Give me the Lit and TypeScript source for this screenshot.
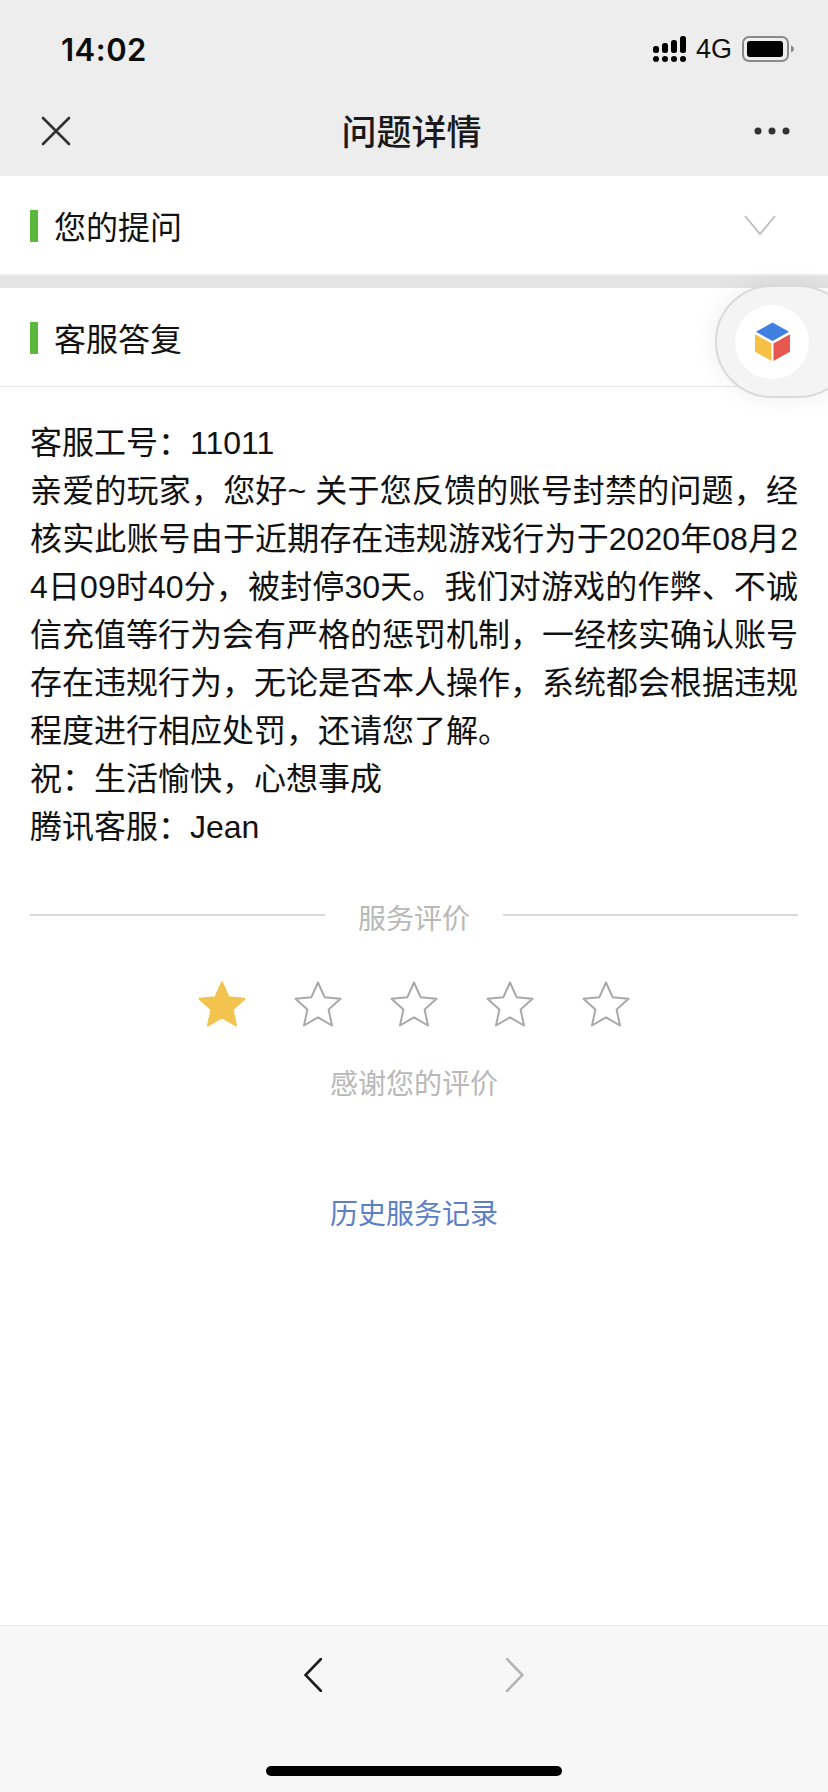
import { LitElement, html, css, svg } from 'lit';
import { customElement } from 'lit/decorators.js';

const STAR = '24,2.5 30.6,17.2 46.5,18.8 34.6,29.6 38,45.5 24,37.4 10,45.5 13.4,29.6 1.5,18.8 17.4,17.2';

@customElement('app-root')
export class AppRoot extends LitElement {
  static styles = css`
    :host {
      display: block;
      position: relative;
      height: 1792px;
      overflow: hidden;
      background: #fff;
      color: #111;
      font-family: "Liberation Sans", "Noto Sans CJK SC", sans-serif;
    }

    .page {
      display: flex;
      flex-direction: column;
      height: 100%;
    }

    .header {
      height: 176px;
      flex: none;
      background: #ededed;
    }

    .status {
      display: flex;
      justify-content: space-between;
      align-items: center;
      height: 98px;
      padding: 0 34px 0 61px;
      box-sizing: border-box;
    }

    .time {
      font-family: Inter, sans-serif;
      font-size: 31px;
      font-weight: 600;
      letter-spacing: 0.5px;
      color: #0c0c0c;
    }

    .indicators {
      display: flex;
      align-items: center;
      gap: 10px;
    }

    .net {
      font-size: 27px;
      color: #111;
    }

    .nav {
      display: grid;
      grid-template-columns: 1fr auto 1fr;
      align-items: center;
      height: 66px;
      padding: 0 46px 0 41px;
    }

    .nav .more {
      justify-self: end;
      display: block;
      margin-right: -8px;
    }

    .nav-title {
      padding-bottom: 4px;
      font-size: 35px;
      font-weight: 500;
      color: #1a1a1a;
    }

    .section {
      display: flex;
      align-items: center;
      flex: none;
      height: 98px;
      padding: 0 52px 0 30px;
      font-size: 32px;
      color: #111;
      box-sizing: border-box;
    }

    .section.answer {
      height: 99px;
      border-bottom: 1px solid #e6e6e6;
    }

    .mark {
      width: 8px;
      height: 32px;
      margin: 1px 16px 0 0;
      background: #5cb83c;
    }

    .section-name {
      flex: 1;
    }

    .gap {
      height: 14px;
      flex: none;
      background: #e4e4e4;
      border-top: 2px solid #eee;
      box-sizing: border-box;
    }

    .reply {
      flex: 1;
      padding: 32px 30px 0;
    }

    .body-text {
      margin: 0;
      font-size: 32px;
      line-height: 48px;
      word-break: break-all;
      text-align: justify;
      color: #111;
    }

    .rating-head {
      display: flex;
      align-items: flex-start;
      margin-top: 49px;
      font-size: 28px;
      line-height: 40px;
      color: #b8b8b8;
    }

    .rating-head .line {
      flex: 1;
      height: 2px;
      margin-top: 14px;
      background: #d9d9d9;
    }

    .rating-head span {
      padding: 0 33px;
    }

    .stars {
      display: flex;
      justify-content: center;
      gap: 48px;
      margin-top: 40px;
    }

    .stars svg {
      display: block;
    }

    .thanks,
    .history {
      font-size: 28px;
      line-height: 40px;
      text-align: center;
    }

    .thanks {
      margin-top: 37px;
      color: #b8b8b8;
    }

    .history {
      margin-top: 90px;
      color: #5b80c8;
    }

    .footer {
      position: relative;
      flex: none;
      height: 167px;
      background: #f7f7f7;
      border-top: 1px solid #e6e6e6;
      box-sizing: border-box;
    }

    .pager {
      display: flex;
      justify-content: center;
      gap: 184px;
      padding-top: 32px;
    }

    .home {
      position: absolute;
      left: 266px;
      bottom: 16px;
      width: 296px;
      height: 10px;
      border-radius: 5px;
      background: #000;
    }

    .float {
      position: absolute;
      left: 715px;
      top: 285px;
      width: 140px;
      height: 113px;
      display: flex;
      align-items: center;
      padding-left: 18px;
      box-sizing: border-box;
      border: 2px solid #dadada;
      border-radius: 57px;
      background: #f4f4f4;
      box-shadow: 0 0 24px rgba(0, 0, 0, 0.07);
    }

    .float-icon {
      display: flex;
      align-items: center;
      justify-content: center;
      width: 74px;
      height: 74px;
      border-radius: 50%;
      background: #fff;
    }
  `;

  private star(filled: boolean) {
    return html`<svg width="48" height="48" viewBox="0 0 48 48">
      ${svg`<polygon
        points=${STAR}
        fill=${filled ? '#f2c44f' : 'none'}
        stroke=${filled ? '#f2c44f' : '#a8a8a8'}
        stroke-width="2"
        stroke-linejoin="round"
      ></polygon>`}
    </svg>`;
  }

  render() {
    return html`
      <div class="page">
        <div class="header">
          <div class="status">
            <span class="time">14:02</span>
            <div class="indicators">
              <svg width="33" height="26" viewBox="0 0 33 26" fill="#000">
                <rect x="0" y="10" width="6" height="7" rx="2.5"></rect>
                <rect x="9" y="7" width="6" height="10" rx="2.5"></rect>
                <rect x="18" y="4" width="6" height="13" rx="2.5"></rect>
                <rect x="27" y="0" width="6" height="17" rx="2.5"></rect>
                <circle cx="3" cy="23" r="3"></circle>
                <circle cx="12" cy="23" r="3"></circle>
                <circle cx="21" cy="23" r="3"></circle>
                <circle cx="30" cy="23" r="3"></circle>
              </svg>
              <span class="net">4G</span>
              <svg width="52" height="26" viewBox="0 0 52 26">
                <rect x="1" y="1" width="45" height="24" rx="6" fill="none" stroke="#8a8a8a" stroke-width="2"></rect>
                <rect x="5" y="5" width="36" height="16" rx="3" fill="#000"></rect>
                <path d="M49 9.5c1.8.6 3 2 3 3.5s-1.200 2.900-3 3.500z" fill="#8a8a8a"></path>
              </svg>
            </div>
          </div>
          <div class="nav">
            <svg width="30" height="30" viewBox="0 0 30 30">
              <path d="M2 2l26 26M28 2L2 28" stroke="#333" stroke-width="2.600" stroke-linecap="round"></path>
            </svg>
            <span class="nav-title">问题详情</span>
            <svg class="more" width="36" height="8" viewBox="0 0 36 8" fill="#333">
              <circle cx="4" cy="4" r="3.500"></circle>
              <circle cx="18" cy="4" r="3.500"></circle>
              <circle cx="32" cy="4" r="3.500"></circle>
            </svg>
          </div>
        </div>

        <div class="section">
          <i class="mark"></i>
          <span class="section-name">您的提问</span>
          <svg width="32" height="20" viewBox="0 0 32 20">
            <path d="M1 1l15 18L31 1" fill="none" stroke="#bbb" stroke-width="1.800"></path>
          </svg>
        </div>
        <div class="gap"></div>
        <div class="section answer">
          <i class="mark"></i>
          <span class="section-name">客服答复</span>
        </div>

        <div class="reply">
          <p class="body-text">
            客服工号：11011<br />
            亲爱的玩家，您好~ 关于您反馈的账号封禁的问题，经核实此账号由于近期存在违规游戏行为于2020年08月24日09时40分，被封停30天。我们对游戏的作弊、不诚信充值等行为会有严格的惩罚机制，一经核实确认账号存在违规行为，无论是否本人操作，系统都会根据违规程度进行相应处罚，还请您了解。<br />
            祝：生活愉快，心想事成<br />
            腾讯客服：Jean
          </p>
          <div class="rating-head">
            <i class="line"></i>
            <span>服务评价</span>
            <i class="line"></i>
          </div>
          <div class="stars">
            ${[true, false, false, false, false].map((on) => this.star(on))}
          </div>
          <div class="thanks">感谢您的评价</div>
          <div class="history">历史服务记录</div>
        </div>

        <div class="footer">
          <div class="pager">
            <svg width="18" height="34" viewBox="0 0 18 34">
              <path d="M17 1L1.500 17 17 33" fill="none" stroke="#1c1c1c" stroke-width="2.600" stroke-linecap="round"></path>
            </svg>
            <svg width="18" height="34" viewBox="0 0 18 34">
              <path d="M1 1l15.500 16L1 33" fill="none" stroke="#b4b4b4" stroke-width="2.600" stroke-linecap="round"></path>
            </svg>
          </div>
          <div class="home"></div>
        </div>
      </div>

      <div class="float">
        <div class="float-icon">
          <svg width="35" height="39" viewBox="0 0 36 40">
            <path d="M18 0.500L35 10 18 19.500 1 10z" fill="#3f7fe0"></path>
            <path d="M0 12.500L17 22v18L0 30.500z" fill="#f4c145"></path>
            <path d="M36 12.500L19 22v18l17-9.500z" fill="#e5574f"></path>
          </svg>
        </div>
      </div>
    `;
  }
}
